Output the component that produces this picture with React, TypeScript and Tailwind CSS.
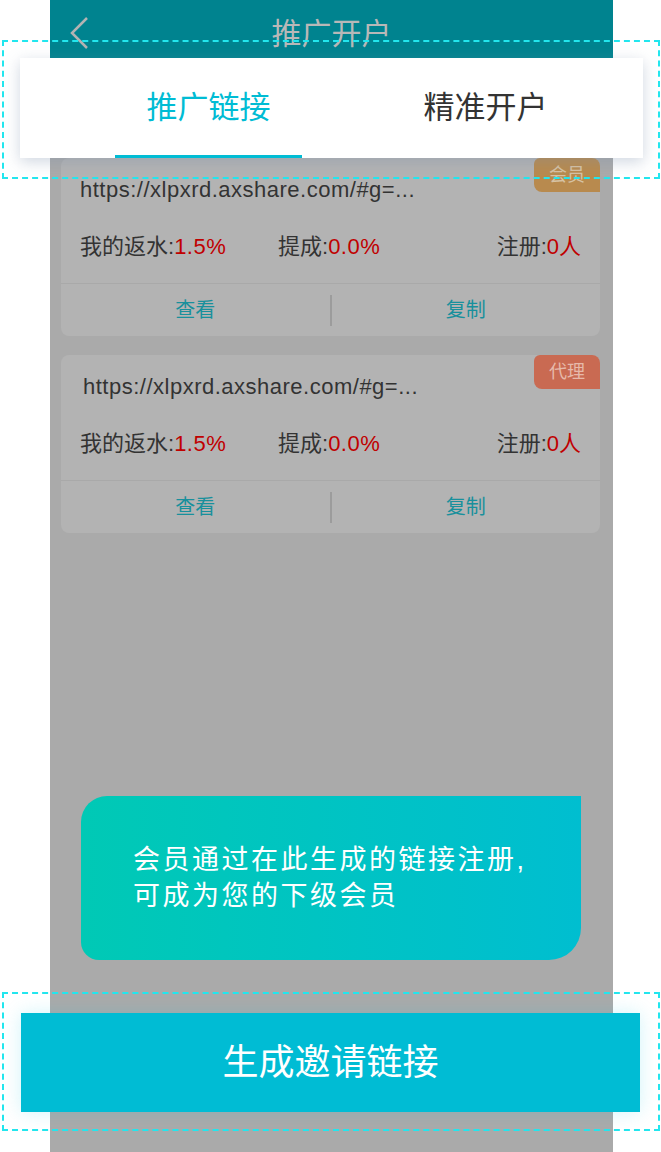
const font = { fontFamily: '"Liberation Sans", "Noto Sans CJK SC", sans-serif' }

const LinkCard = ({ badge, badgeClass, urlPad }: { badge: string; badgeClass: string; urlPad: string }) => {
  return (
    <div className="relative ml-[11px] w-[539px] rounded-lg bg-[#b3b3b3]">
      <div className={`absolute right-0 top-0 flex h-[34px] w-[66px] items-center justify-center rounded-tr-lg rounded-tl-md rounded-bl-lg text-[18px] ${badgeClass}`}>
        {badge}
      </div>
      <div className={`h-[76px] pt-[15px] ${urlPad} text-[22px] tracking-[0.5px] text-[#333]`}>https://xlpxrd.axshare.com/#g=...</div>
      <div className="flex h-[49px] items-start px-[19px] text-[22px] leading-[26px] text-[#333]">
        <div className="w-[198px]">
          我的返水:<span className="tracking-[0.5px] text-[#c00000]">1.5%</span>
        </div>
        <div>
          提成:<span className="tracking-[0.5px] text-[#c00000]">0.0%</span>
        </div>
        <div className="ml-auto">
          注册:<span className="text-[#c00000]">0人</span>
        </div>
      </div>
      <div className="flex h-[53px] items-center border-t border-[#a9a9a9] text-[20px] text-[#18909c]">
        <div className="flex-1 text-center">查看</div>
        <div className="h-[31px] w-[2px] bg-[#9c9c9c]" />
        <div className="flex-1 text-center">复制</div>
      </div>
    </div>
  )
}

const App = () => {
  return (
    <div className="relative h-[1152px] w-[661px] overflow-hidden bg-white" style={font}>
      <div className="ml-[50px] flex h-[1152px] w-[563px] flex-col bg-[#aaaaaa]">
        {/*--- header ---*/}
        <div className="relative flex h-[58px] items-center justify-center bg-[#00838f]">
          <svg className="absolute left-[18px] top-[16px]" width="22" height="34" viewBox="0 0 22 34">
            <path d="M19 2 L4 17 L19 32" fill="none" stroke="#b3b3b3" strokeWidth="2.5" />
          </svg>
          <span className="mt-[8px] text-[30px] text-[#b8b8b8]">推广开户</span>
        </div>

        {/*--- tabs ---*/}
        <div className="relative z-10 -mx-[30px] flex h-[100px] items-center bg-white shadow-[0_4px_14px_rgba(120,140,170,0.35)]">
          <div className="relative ml-[95px] flex h-full w-[187px] items-center justify-center text-[31px] text-[#00bcd4]">
            推广链接
            <div className="absolute bottom-0 left-0 h-[3px] w-full bg-[#00bcd4]" />
          </div>
          <div className="ml-[90px] flex h-full w-[187px] items-center justify-center text-[31px] text-[#333]">精准开户</div>
        </div>

        {/*--- cards ---*/}
        <div className="flex flex-col gap-[19px]">
          <LinkCard badge="会员" badgeClass="bg-[#b88a4e] text-[#d6c2a4]" urlPad="pl-[19px]" />
          <LinkCard badge="代理" badgeClass="bg-[#c96a52] text-[#e6b9aa]" urlPad="pl-[22px]" />
        </div>

        {/*--- tip ---*/}
        <div className="ml-[31px] mt-[263px] flex h-[164px] w-[500px] flex-col justify-center rounded-tl-[26px] rounded-bl-[18px] rounded-br-[32px] bg-gradient-to-r from-[#00c9b5] to-[#00bed0] pl-[52px] text-[27px] leading-[36px] tracking-[2.5px] text-white">
          <p>会员通过在此生成的链接注册,</p>
          <p>可成为您的下级会员</p>
        </div>

        {/*--- button ---*/}
        <div className="relative z-10 -ml-[29px] mt-[53px] flex h-[99px] w-[619px] items-center justify-center bg-[#00bcd4] text-[36px] text-white shadow-[0_0_18px_rgba(0,200,230,0.18)]">
          生成邀请链接
        </div>
      </div>

      {/*--- annotation boxes ---*/}
      <div className="absolute left-[2px] top-[40px] z-20 h-[139px] w-[658px] border-2 border-dashed border-[#22e6ee]" />
      <div className="absolute left-[2px] top-[992px] z-20 h-[139px] w-[658px] border-2 border-dashed border-[#22e6ee]" />
    </div>
  )
}

export default App
